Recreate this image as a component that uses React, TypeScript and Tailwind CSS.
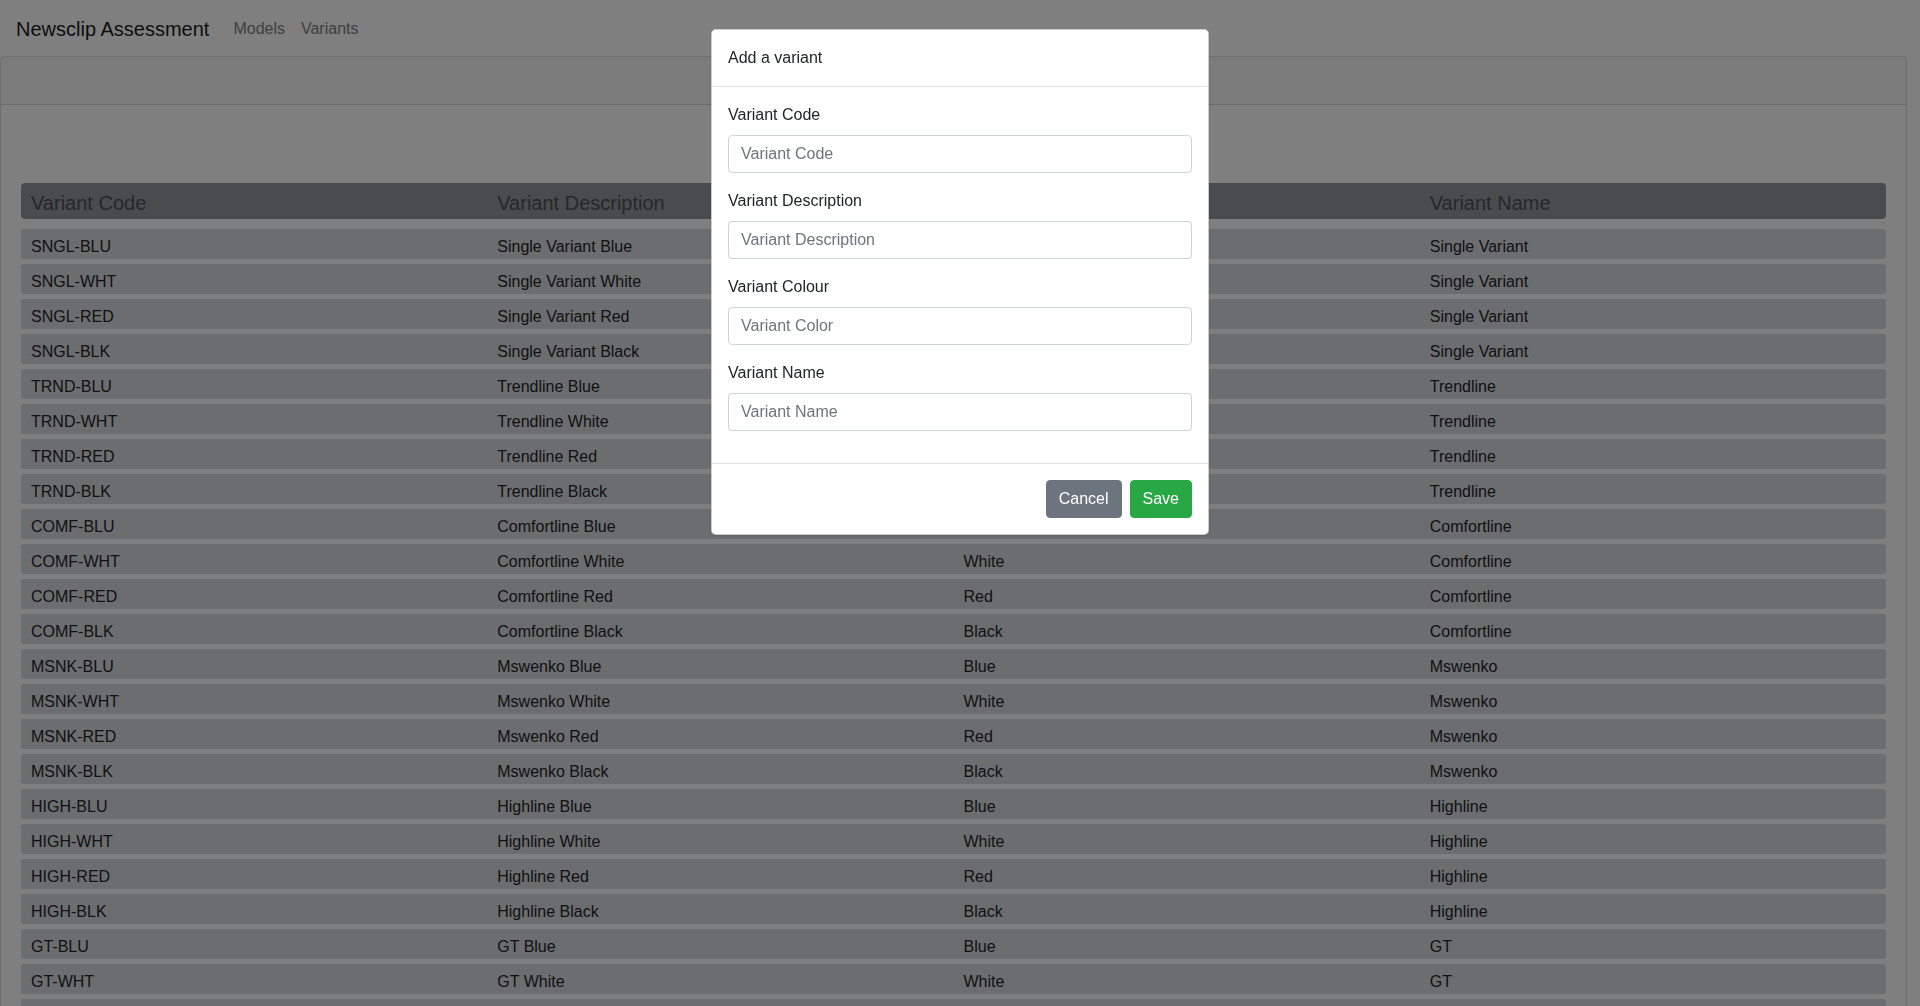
import * as React from 'react'

const lines = [
  { code: 'SNGL', desc: 'Single Variant', name: 'Single Variant' },
  { code: 'TRND', desc: 'Trendline', name: 'Trendline' },
  { code: 'COMF', desc: 'Comfortline', name: 'Comfortline' },
  { code: 'MSNK', desc: 'Mswenko', name: 'Mswenko' },
  { code: 'HIGH', desc: 'Highline', name: 'Highline' },
  { code: 'GT', desc: 'GT', name: 'GT' },
]

const colours = [
  { code: 'BLU', colour: 'Blue' },
  { code: 'WHT', colour: 'White' },
  { code: 'RED', colour: 'Red' },
  { code: 'BLK', colour: 'Black' },
]

const variants = lines.flatMap((line) =>
  colours.map((c) => ({
    code: `${line.code}-${c.code}`,
    description: `${line.desc} ${c.colour}`,
    colour: c.colour,
    name: line.name,
  }))
)

const fields = [
  { label: 'Variant Code', placeholder: 'Variant Code' },
  { label: 'Variant Description', placeholder: 'Variant Description' },
  { label: 'Variant Colour', placeholder: 'Variant Color' },
  { label: 'Variant Name', placeholder: 'Variant Name' },
]

export default function App() {
  return (
    <div className="h-screen overflow-hidden bg-white pr-[13px] font-['Liberation_Sans',Arial,sans-serif] text-[#212529]">
      {/* navbar */}
      <nav className="flex items-center h-[56px] px-4 pt-[2px]">
        <span className="text-[20px] leading-[30px] text-[#1a1a1a] mr-4">Newsclip Assessment</span>
        <a className="px-2 text-base leading-6 text-[#808080]">Models</a>
        <a className="px-2 text-base leading-6 text-[#808080]">Variants</a>
      </nav>

      {/* card */}
      <div className="border border-black/[0.125] rounded">
        <div className="h-[48px] bg-black/[0.03] border-b border-black/[0.125]" />
        <div className="px-5 pt-[78px]">
          <div className="grid grid-cols-4 rounded bg-[#95979a] text-[20px] leading-6 text-[#4c5054] pt-[8px] pb-[4px]">
            <div className="px-[10px]">Variant Code</div>
            <div className="px-[10px]">Variant Description</div>
            <div className="px-[10px]">Variant Colour</div>
            <div className="px-[10px]">Variant Name</div>
          </div>
          <div className="flex flex-col gap-[5px] mt-[10px]">
            {variants.map((v) => (
              <div key={v.code} className="grid grid-cols-4 rounded-[3px] bg-[#d8dadc] text-base leading-6 pt-[6px] h-[30px]">
                <div className="px-[10px]">{v.code}</div>
                <div className="px-[10px]">{v.description}</div>
                <div className="px-[10px]">{v.colour}</div>
                <div className="px-[10px]">{v.name}</div>
              </div>
            ))}
          </div>
        </div>
      </div>

      {/* backdrop */}
      <div className="fixed inset-0 bg-black/50" />

      {/* modal */}
      <div className="fixed inset-0 flex justify-center pt-[29px]">
        <div className="w-[498px] h-fit bg-white rounded-[5px] border border-black/20 shadow-sm">
          <div className="px-4 py-4 border-b border-[#dee2e6]">
            <h5 className="text-base leading-6">Add a variant</h5>
          </div>
          <div className="p-4">
            {fields.map((f) => (
              <div key={f.label} className="mb-4">
                <label className="block mb-2 text-base leading-6">{f.label}</label>
                <input
                  placeholder={f.placeholder}
                  className="block w-full h-[38px] px-3 border border-[#ced4da] rounded text-base text-[#495057] placeholder:text-[#6c757d] outline-none"
                />
              </div>
            ))}
          </div>
          <div className="flex justify-end p-3 border-t border-[#dee2e6]">
            <button className="m-1 h-[38px] px-3 rounded bg-[#6c757d] border border-[#6c757d] text-white text-base">Cancel</button>
            <button className="m-1 h-[38px] px-3 rounded bg-[#28a745] border border-[#28a745] text-white text-base">Save</button>
          </div>
        </div>
      </div>
    </div>
  )
}
